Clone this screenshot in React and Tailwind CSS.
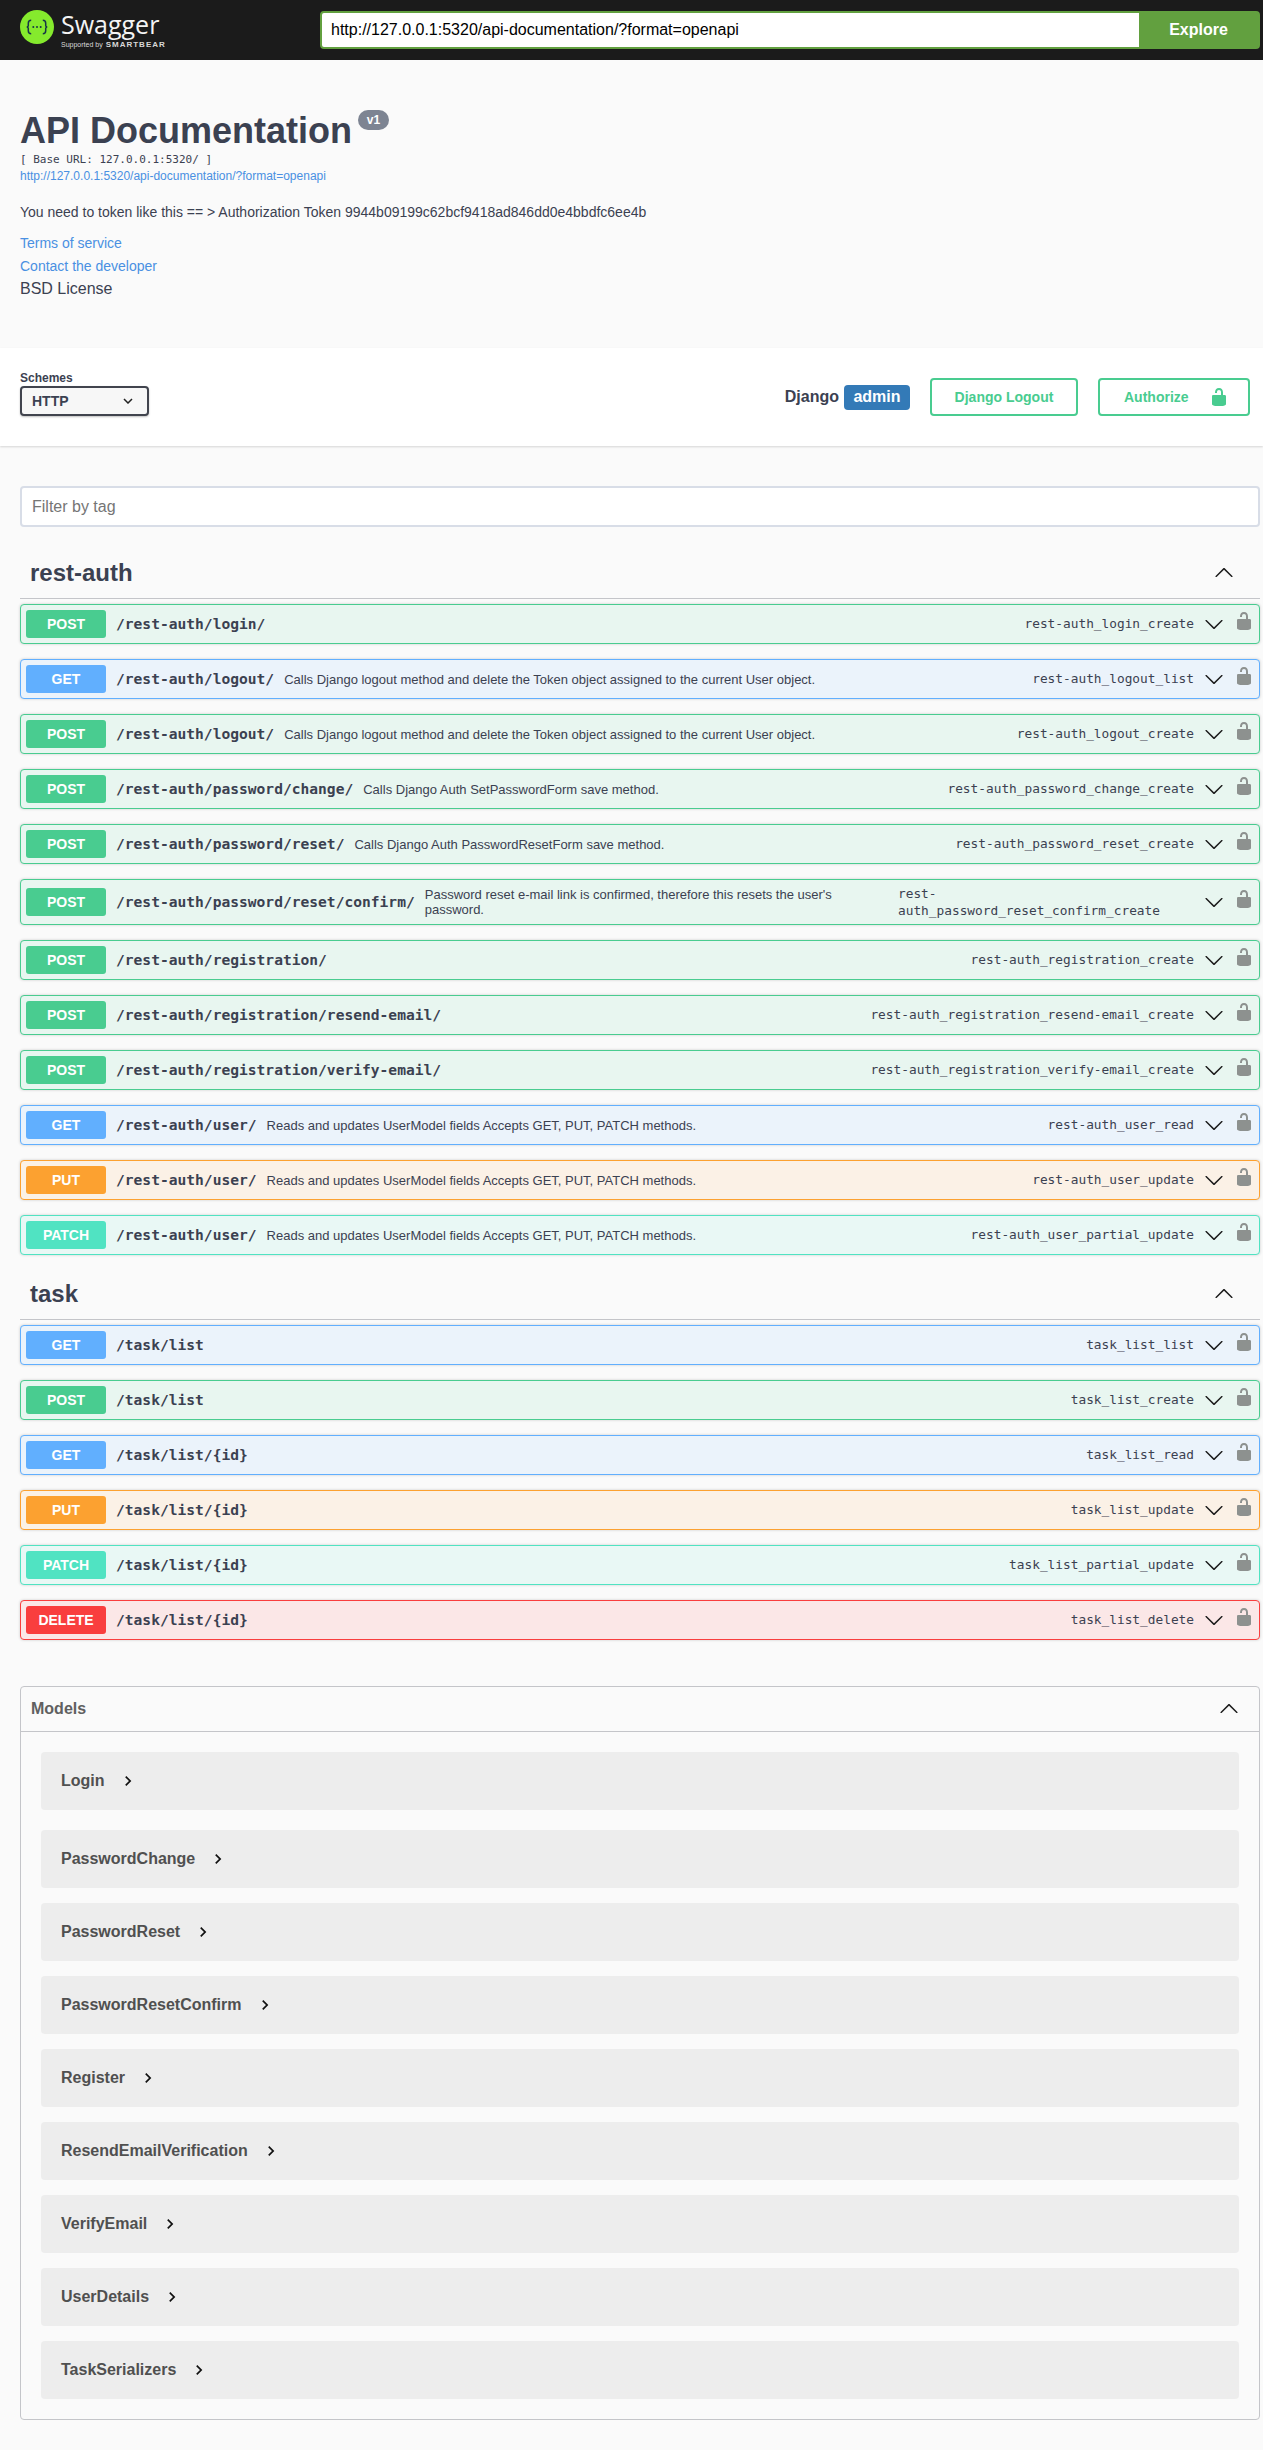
import React from "react";

const MONO = "font-['DejaVu_Sans_Mono',monospace]";

const styles = {
  POST: { row: "bg-[#e8f6f0] border-[#49cc90]", badge: "bg-[#49cc90]" },
  GET: { row: "bg-[#ebf3fb] border-[#61affe]", badge: "bg-[#61affe]" },
  PUT: { row: "bg-[#fbf1e6] border-[#fca130]", badge: "bg-[#fca130]" },
  PATCH: { row: "bg-[#e9f8f5] border-[#50e3c2]", badge: "bg-[#50e3c2]" },
  DELETE: { row: "bg-[#fbe7e7] border-[#f93e3e]", badge: "bg-[#f93e3e]" },
};

const LOGOUT = "Calls Django logout method and delete the Token object assigned to the current User object.";
const USER = "Reads and updates UserModel fields Accepts GET, PUT, PATCH methods.";

const restAuth = [
  ["POST", "/rest-auth/login/", "", "rest-auth_login_create"],
  ["GET", "/rest-auth/logout/", LOGOUT, "rest-auth_logout_list"],
  ["POST", "/rest-auth/logout/", LOGOUT, "rest-auth_logout_create"],
  ["POST", "/rest-auth/password/change/", "Calls Django Auth SetPasswordForm save method.", "rest-auth_password_change_create"],
  ["POST", "/rest-auth/password/reset/", "Calls Django Auth PasswordResetForm save method.", "rest-auth_password_reset_create"],
  ["POST", "/rest-auth/password/reset/confirm/", "Password reset e-mail link is confirmed, therefore this resets the user's password.", "rest-auth_password_reset_confirm_create"],
  ["POST", "/rest-auth/registration/", "", "rest-auth_registration_create"],
  ["POST", "/rest-auth/registration/resend-email/", "", "rest-auth_registration_resend-email_create"],
  ["POST", "/rest-auth/registration/verify-email/", "", "rest-auth_registration_verify-email_create"],
  ["GET", "/rest-auth/user/", USER, "rest-auth_user_read"],
  ["PUT", "/rest-auth/user/", USER, "rest-auth_user_update"],
  ["PATCH", "/rest-auth/user/", USER, "rest-auth_user_partial_update"],
];

const tasks = [
  ["GET", "/task/list", "", "task_list_list"],
  ["POST", "/task/list", "", "task_list_create"],
  ["GET", "/task/list/{id}", "", "task_list_read"],
  ["PUT", "/task/list/{id}", "", "task_list_update"],
  ["PATCH", "/task/list/{id}", "", "task_list_partial_update"],
  ["DELETE", "/task/list/{id}", "", "task_list_delete"],
];

const models = [
  "Login",
  "PasswordChange",
  "PasswordReset",
  "PasswordResetConfirm",
  "Register",
  "ResendEmailVerification",
  "VerifyEmail",
  "UserDetails",
  "TaskSerializers",
];

function Arrow({ up, className = "" }) {
  return (
    <svg viewBox="0 0 20 20" className={`w-5 h-5 shrink-0 fill-[#1b1b1b] ${up ? "rotate-180" : ""} ${className}`}>
      <path d="M17.418 6.109c.272-.268.709-.268.979 0s.271.701 0 .969l-7.908 7.83c-.27.268-.707.268-.979 0l-7.908-7.83c-.27-.268-.27-.701 0-.969.271-.268.709-.268.979 0L10 13.25l7.418-7.141z" />
    </svg>
  );
}

function Lock({ className = "" }) {
  return (
    <svg viewBox="0 0 20 20" className={`w-5 h-5 shrink-0 ${className}`}>
      <path d="M15.8 8H14V5.6C14 2.703 12.665 1 10 1 7.334 1 6 2.703 6 5.6V6h2v-.801C8 3.754 8.797 3 10 3c1.203 0 2 .754 2 2.199V8H4c-.553 0-1 .646-1 1.199V17c0 .549.428 1.139.951 1.307l1.197.387C5.672 18.861 6.55 19 7.1 19h5.8c.549 0 1.428-.139 1.951-.307l1.196-.387c.524-.167.953-.757.953-1.306V9.199C17 8.646 16.352 8 15.8 8z" />
    </svg>
  );
}

function Logo() {
  return (
    <svg viewBox="0 0 34 34" className="w-[34px] h-[34px] shrink-0">
      <circle cx="17" cy="17" r="17" fill="#85ea2d" />
      <path
        d="M11.2 10.2c-2.6 0-2.9 1.3-2.9 3v2.2c0 1-.6 1.5-1.5 1.6 .9.1 1.5.6 1.5 1.6v2.2c0 1.700.3 3 2.900 3M22.800 10.200c2.600 0 2.900 1.300 2.900 3v2.200c0 1 .6 1.500 1.500 1.600-.9.1-1.500.6-1.500 1.600v2.200c0 1.700-.3 3-2.900 3"
        fill="none"
        stroke="#173647"
        strokeWidth="1.500"
      />
      <circle cx="13.300" cy="17" r="1" fill="#173647" />
      <circle cx="17" cy="17" r="1" fill="#173647" />
      <circle cx="20.700" cy="17" r="1" fill="#173647" />
    </svg>
  );
}

function Row({ op }) {
  const [method, path, desc, id] = op;
  const s = styles[method];
  const wrapped = id.includes("confirm");
  return (
    <div className={`flex items-center border rounded-[4px] p-[5px] mb-[15px] shadow-[0_0_3px_rgba(0,0,0,0.19)] ${s.row}`}>
      <span className={`w-20 h-7 shrink-0 rounded-[3px] flex items-center justify-center text-white text-sm font-bold ${s.badge}`}>
        {method}
      </span>
      <span className={`ml-[10px] shrink-0 text-[14.6px] font-bold text-[#3b4151] ${MONO}`}>{path}</span>
      <span className="ml-[10px] flex-1 min-w-0 pr-[50px] text-[13px] leading-[15px] text-[#3b4151]">{desc}</span>
      <span className={`ml-[10px] shrink-0 text-[12.8px] text-[#3b4151] ${MONO} ${wrapped ? "w-[296px] leading-[17px]" : ""}`}>
        {wrapped ? (<>rest-<br />auth_password_reset_confirm_create</>) : id}
      </span>
      <Arrow className="ml-[10px]" />
      <Lock className="ml-[10px] mb-[6px] fill-[#8d918f]" />
    </div>
  );
}

function Tag({ name, ops, className = "" }) {
  return (
    <section className={className}>
      <div className="flex items-center justify-between h-[52px] border-b border-[#c4c5c9] pl-[10px] pr-[26px] mb-[5px]">
        <h3 className="text-2xl font-bold text-[#3b4151]">{name}</h3>
        <Arrow up />
      </div>
      {ops.map((op, i) => (
        <Row key={i} op={op} />
      ))}
    </section>
  );
}

export default function App() {
  return (
    <div className="min-h-[2450px] bg-[#fafafa] font-['Liberation_Sans',Arial,sans-serif] text-[#3b4151]">
      <header className="h-[60px] bg-[#1b1b1b] flex items-center pl-5 pr-[3px]">
        <div className="w-[300px] flex items-start self-start pt-[10px]">
          <Logo />
          <div className="ml-[7px] text-white leading-none">
            <div className="text-[25px] leading-[27px] mt-[1px] font-['Open_Sans',sans-serif] text-[#f4f4f4]">Swagger</div>
            <div className="flex items-baseline gap-[3px] mt-[3px] text-[#d8d8d8]">
              <span className="text-[7px]">Supported by</span>
              <span className="text-[8px] font-bold tracking-[1px]">SMARTBEAR</span>
            </div>
          </div>
        </div>
        <div className="flex-1 flex h-[38px] -mt-[1px] border-2 border-[#62a03f] rounded-[4px] bg-[#62a03f]">
          <div className="flex-1 bg-white rounded-l-[2px] flex items-center pl-[9px] text-base text-black">
            http://127.0.0.1:5320/api-documentation/?format=openapi
          </div>
          <div className="w-[119px] flex items-center justify-center text-white font-bold text-base">Explore</div>
        </div>
      </header>

      <section className="h-[288px] pl-5 pt-[48px]">
        <div className="flex items-start">
          <h2 className="text-[36px] leading-[45px] font-bold">API Documentation</h2>
          <span className="ml-[6px] mt-[2px] h-5 w-[31px] rounded-[57px] bg-[#7d8492] flex items-center justify-center text-white text-[12px] font-bold">v1</span>
        </div>
        <div className={`text-[11px] leading-[15px] -mt-[1px] ${MONO}`}>[ Base URL: 127.0.0.1:5320/ ]</div>
        <div className="text-[12px] leading-[15px] mt-[2px] text-[#4990e2]">http://127.0.0.1:5320/api-documentation/?format=openapi</div>
        <p className="text-sm leading-[17px] mt-[20px]">You need to token like this == &gt; Authorization Token 9944b09199c62bcf9418ad846dd0e4bbdfc6ee4b</p>
        <div className="text-sm leading-[23px] mt-[11px] text-[#4990e2]">Terms of service</div>
        <div className="text-sm leading-[23px] text-[#4990e2]">Contact the developer</div>
        <div className="text-base leading-[22px]">BSD License</div>
      </section>

      <section className="h-[98px] bg-white shadow-[0_1px_2px_rgba(0,0,0,0.15)] flex items-start pl-5 pr-[13px] pt-[30px]">
        <div className="w-[129px] mr-auto">
          <div className="text-[12px] font-bold leading-[15px] -mt-[7px]">Schemes</div>
          <div className="h-[30px] border-2 border-[#41444e] rounded-[4px] bg-[#f7f7f7] shadow-[0_1px_2px_rgba(0,0,0,0.25)] flex items-center justify-between pl-[10px] pr-[14px] text-sm font-bold">
            HTTP
            <svg viewBox="0 0 10 6" className="w-[10px] h-[6px]">
              <path d="M1 1l4 4 4-4" fill="none" stroke="#222" strokeWidth="1.500" />
            </svg>
          </div>
        </div>
        <div className="flex items-center h-[38px]">
          <span className="text-base font-bold mr-[5px]">Django</span>
          <span className="h-[25px] w-[66px] rounded-[4px] bg-[#337ab7] text-white font-bold text-base flex items-center justify-center">admin</span>
          <span className="ml-5 w-[148px] h-[38px] border-2 border-[#49cc90] rounded-[4px] flex items-center justify-center text-sm font-bold text-[#49cc90]">Django Logout</span>
          <span className="ml-5 w-[152px] h-[38px] border-2 border-[#49cc90] rounded-[4px] flex items-center pl-6 text-sm font-bold text-[#49cc90]">
            Authorize
            <Lock className="ml-[20px] fill-[#49cc90]" />
          </span>
        </div>
      </section>

      <main className="pl-5 pr-[3px]">
        <div className="mt-[40px] h-[41px] border-2 border-[#d8dde7] rounded-[4px] bg-white flex items-center pl-[10px] text-base text-[#757575]">Filter by tag</div>
        <Tag name="rest-auth" ops={restAuth} className="mt-[20px]" />
        <Tag name="task" ops={tasks} className="-mt-[2px]" />

        <section className="mt-[46px] h-[734px] border border-[#c4c5c9] rounded-[4px]">
          <div className="h-[45px] border-b border-[#c4c5c9] flex items-center justify-between pl-[10px] pr-5">
            <span className="text-base font-bold text-[#606060]">Models</span>
            <Arrow up />
          </div>
          <div className="px-5 pt-5">
            {models.map((m, i) => (
              <div key={m} className={`h-[58px] rounded-[4px] bg-[#ededed] flex items-center pl-5 text-base font-bold text-[#505050] ${i === 0 ? "mb-5" : "mb-[15px]"}`}>
                {m}
                <svg viewBox="0 0 24 24" className="w-5 h-5 ml-[13px] fill-[#111]">
                  <path d="M10 6L8.59 7.41 13.17 12l-4.58 4.59L10 18l6-6z" />
                </svg>
              </div>
            ))}
          </div>
        </section>
      </main>
    </div>
  );
}
